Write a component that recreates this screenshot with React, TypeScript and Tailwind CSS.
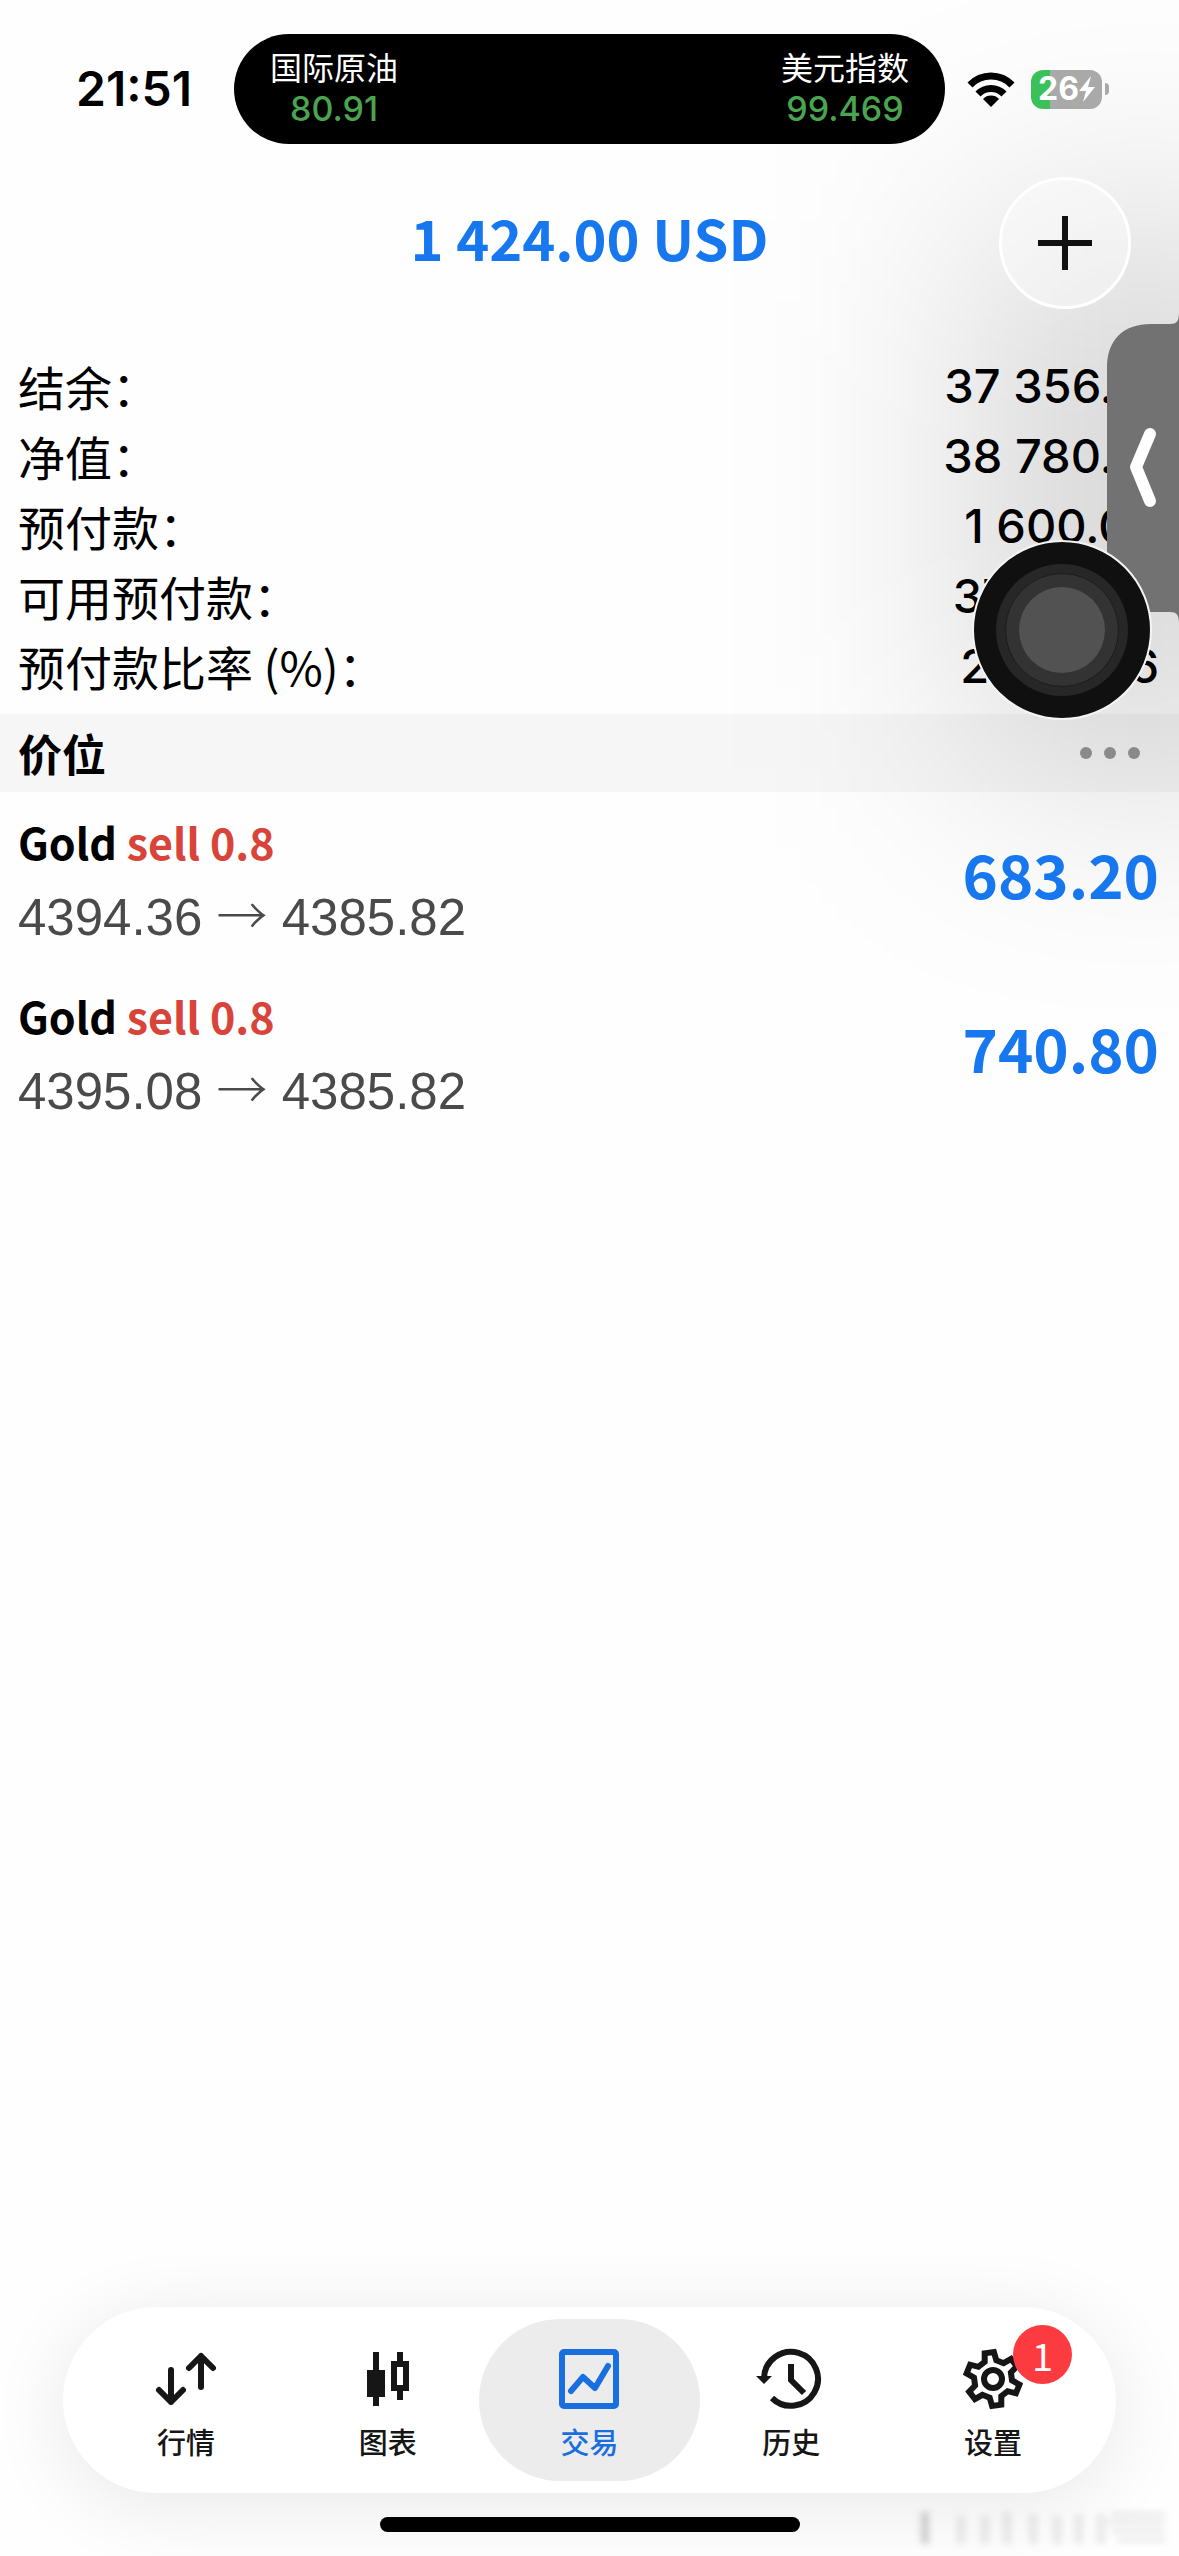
import { Fragment, type ReactNode } from "react";

const account = [
  { label: "结余：", value: "37 356.16" },
  { label: "净值：", value: "38 780.16" },
  { label: "预付款：", value: "1 600.00" },
  { label: "可用预付款：", value: "37 180.16" },
  { label: "预付款比率 (%)：", value: "2 423.76" },
];

const positions = [
  { symbol: "Gold", side: "sell 0.8", open: "4394.36", current: "4385.82", profit: "683.20" },
  { symbol: "Gold", side: "sell 0.8", open: "4395.08", current: "4385.82", profit: "740.80" },
];

// Outline of the six-tooth gear around (30, 30)
const gearPoints = [0, 1, 2, 3, 4, 5]
  .flatMap((tooth) =>
    [
      [19, -18],
      [27, -10],
      [27, 10],
      [19, 18],
    ].map(([radius, offset]) => {
      const angle = ((tooth * 60 - 98 + offset) * Math.PI) / 180;
      return `${(30 + radius * Math.cos(angle)).toFixed(1)},${(30 + radius * Math.sin(angle)).toFixed(1)}`;
    })
  )
  .join(" ");

const Icon = ({ children }: { children: ReactNode }) => (
  <svg
    viewBox="0 0 60 60"
    className="size-[60px] overflow-visible"
    fill="none"
    stroke="currentColor"
    strokeWidth="6"
    aria-hidden="true"
  >
    {children}
  </svg>
);

const tabs = [
  {
    label: "行情",
    icon: (
      <Icon>
        <path
          d="M15 21v32M3 41l12 12 12-12M45 38V7M33 19L45 7l12 12"
          strokeLinecap="round"
          strokeLinejoin="round"
        />
      </Icon>
    ),
  },
  {
    label: "图表",
    icon: (
      <Icon>
        <path d="M18 3v54M42 3v10M42 41v10" />
        <path d="M9 21h18v27H9z" fill="currentColor" stroke="none" />
        <path d="M36 15h12v24H36z" />
      </Icon>
    ),
  },
  {
    label: "交易",
    active: true,
    icon: (
      <Icon>
        <rect x="3" y="3" width="54" height="54" rx="2" />
        <path d="M12 42l12-14 12 11 13-22" strokeLinecap="round" strokeLinejoin="round" />
      </Icon>
    ),
  },
  {
    label: "历史",
    icon: (
      <Icon>
        <path d="M3 29a27 27 0 1 1 8 20" />
        <path d="M-5 27h16l-8 8z" fill="currentColor" stroke="none" />
        <path d="M30 15v16l13 13" />
      </Icon>
    ),
  },
  {
    label: "设置",
    badge: "1",
    icon: (
      <Icon>
        <polygon points={gearPoints} />
        <circle cx="30" cy="30" r="9" />
      </Icon>
    ),
  },
];

const StatusBar = () => (
  <header className="relative z-20 grid grid-cols-[234px_1fr_234px] items-center pt-[34px] font-[Inter,'Noto_Sans_CJK_SC',sans-serif]">
    <time className="pl-[76px] text-[48px] leading-none font-semibold">21:51</time>
    <div className="flex h-[110px] items-center justify-between rounded-full bg-black px-9 text-center text-[32px] leading-[40px] text-white">
      <div>
        <p>国际原油</p>
        <p className="text-[34px] font-medium text-[#4aa551]">80.91</p>
      </div>
      <div>
        <p>美元指数</p>
        <p className="text-[34px] font-medium text-[#4aa551]">99.469</p>
      </div>
    </div>
    <div className="flex items-center gap-4 pl-[22px]">
      <svg viewBox="0 0 48 36" className="h-9 w-12" aria-hidden="true">
        <path
          d="M3 14a29 29 0 0 1 42 0M11 23a18 18 0 0 1 26 0"
          fill="none"
          stroke="black"
          strokeWidth="7"
        />
        <path d="M24 36l-8-8a11 11 0 0 1 16 0z" />
      </svg>
      <div className="flex items-center gap-[3px]">
        <div className="flex h-[39px] w-[71px] items-center justify-center rounded-[12px] bg-linear-to-r from-[#3ac159] from-27% to-[#a9a9a9] to-27% text-[32px] leading-none font-bold text-white">
          26
          <svg viewBox="0 0 16 26" className="h-[26px] w-4" fill="white" aria-hidden="true">
            <path d="M12 0L0 15h7L4 26 16 11H9z" />
          </svg>
        </div>
        <span className="h-3 w-1 rounded-r-full bg-[#a9a9a9]" />
      </div>
    </div>
  </header>
);

const TabBar = () => (
  <nav className="mx-[63px] flex h-[186px] items-center rounded-full bg-white px-[22px] shadow-[0_12px_80px_rgba(0,0,0,0.09)]">
    {tabs.map((tab) => (
      <button
        key={tab.label}
        type="button"
        aria-current={tab.active ? "page" : undefined}
        className={
          tab.active
            ? "-mx-[10px] flex h-[162px] flex-[222] flex-col items-center justify-center gap-3 rounded-full bg-[#ececec] pt-[10px] text-[#1a6fe0]"
            : "flex h-[162px] flex-[202] flex-col items-center justify-center gap-3 pt-[10px] text-[#161616]"
        }
      >
        <span className="relative">
          {tab.icon}
          {tab.badge && (
            <span className="absolute -top-6 left-[50px] flex size-[59px] items-center justify-center rounded-full bg-[#fc3b40] text-[38px] text-white">
              {tab.badge}
            </span>
          )}
        </span>
        <span className="text-[29px] leading-[40px] font-medium">{tab.label}</span>
      </button>
    ))}
  </nav>
);

const App = () => {
  return (
    <div className="relative flex min-h-screen w-full flex-col overflow-hidden bg-[#fefefe] font-['Noto_Sans_CJK_SC',sans-serif] text-black">
      {/* Soft shade around the floating controls */}
      <div className="pointer-events-none absolute top-[220px] -right-[130px] z-10 h-[550px] w-[330px] bg-black/16 blur-[120px]" />

      <StatusBar />

      {/* Profit */}
      <div className="relative z-20 grid grid-cols-[1fr_auto_1fr] items-center px-[48px] pt-[33px]">
        <h1 className="col-start-2 pb-3 text-[56px] leading-none font-bold text-[#1677ee]">
          1 424.00 USD
        </h1>
        <button
          type="button"
          aria-label="新订单"
          className="flex size-[132px] items-center justify-center justify-self-end rounded-full border-[3px] border-white bg-white/40"
        >
          <svg viewBox="0 0 54 54" className="size-[54px]" stroke="#111" strokeWidth="6" aria-hidden="true">
            <path d="M27 0v54M0 27h54" />
          </svg>
        </button>
      </div>

      {/* Account summary */}
      <dl className="relative z-20 grid grid-cols-[auto_1fr] pt-[42px] pr-5 pb-[13px] pl-[18px] text-[47px] leading-[70px]">
        {account.map((row) => (
          <Fragment key={row.label}>
            <dt>{row.label}</dt>
            <dd className="text-right font-[Inter,sans-serif] font-medium">{row.value}</dd>
          </Fragment>
        ))}
      </dl>

      {/* Positions */}
      <div className="flex h-[78px] items-center justify-between bg-[#f6f6f6] pr-[39px] pl-[18px]">
        <h2 className="text-[44px] leading-none font-bold">价位</h2>
        <button type="button" aria-label="更多" className="relative z-20 flex gap-3">
          <span className="size-3 rounded-full bg-[#8a8a8a]" />
          <span className="size-3 rounded-full bg-[#8a8a8a]" />
          <span className="size-3 rounded-full bg-[#8a8a8a]" />
        </button>
      </div>
      <ul>
        {positions.map((position) => (
          <li key={position.open} className="flex h-[174px] items-center justify-between pr-5 pl-[18px]">
            <div>
              <p className="text-[43px] leading-[72px] font-bold">
                {position.symbol} <span className="text-[#d9443a]">{position.side}</span>
              </p>
              <p className="font-['Liberation_Sans','Noto_Sans_CJK_SC',sans-serif] text-[51px] leading-[72px] text-[#4a4a4a]">
                {position.open}{" "}
                <span className="font-['Noto_Sans_CJK_SC',sans-serif] font-light">→</span>{" "}
                {position.current}
              </p>
            </div>
            <p className="relative z-20 pb-3 text-[60px] leading-none font-bold text-[#1677ee]">
              {position.profit}
            </p>
          </li>
        ))}
      </ul>

      {/* Side drawer handle */}
      <button
        type="button"
        aria-label="展开"
        className="absolute top-[312px] right-0 z-20 h-[312px] w-[72px]"
      >
        <svg viewBox="0 0 72 312" className="h-[312px] w-[72px]" aria-hidden="true">
          <path
            d="M72 0c0 9-2 12-9 12H44C16 12 0 28 0 56v200c0 28 16 44 44 44h19c7 0 9 3 9 12z"
            fill="#727272"
          />
          <path
            d="M43 122L29 155l14 34"
            fill="none"
            stroke="white"
            strokeWidth="12"
            strokeLinecap="round"
            strokeLinejoin="round"
          />
        </svg>
      </button>

      {/* Assistive touch */}
      <button
        type="button"
        aria-label="辅助触控"
        className="absolute top-[540px] right-[27px] z-30 flex size-[180px] items-center justify-center rounded-full border-2 border-[#f4f4f4] bg-[#101010]"
      >
        <span className="flex size-[132px] items-center justify-center rounded-full bg-[#272727]">
          <span className="flex size-[114px] items-center justify-center rounded-full border border-[#1c1c1c] bg-[#333]">
            <span className="size-[86px] rounded-full bg-[#525252]" />
          </span>
        </span>
      </button>

      <footer className="mt-auto">
        <TabBar />
        <div className="flex h-[63px] justify-center pt-6">
          <div className="h-[15px] w-[420px] rounded-full bg-black" />
        </div>
      </footer>

      {/* Faint smudge in the corner */}
      <svg
        viewBox="0 0 260 40"
        className="absolute right-2 bottom-3 h-10 w-[260px] blur-[3px]"
        fill="none"
        stroke="#777"
        aria-hidden="true"
      >
        <path d="M14 8v32" strokeWidth="9" opacity=".3" />
        <path d="M50 12v28M74 12v28M96 8v32M122 10v30M146 12v28M168 10v30M190 10v30" strokeWidth="10" opacity=".12" />
        <path d="M200 10h54M196 18h58M200 27h54M206 36h48" strokeWidth="2" opacity=".35" />
      </svg>
    </div>
  );
};

export default App;
